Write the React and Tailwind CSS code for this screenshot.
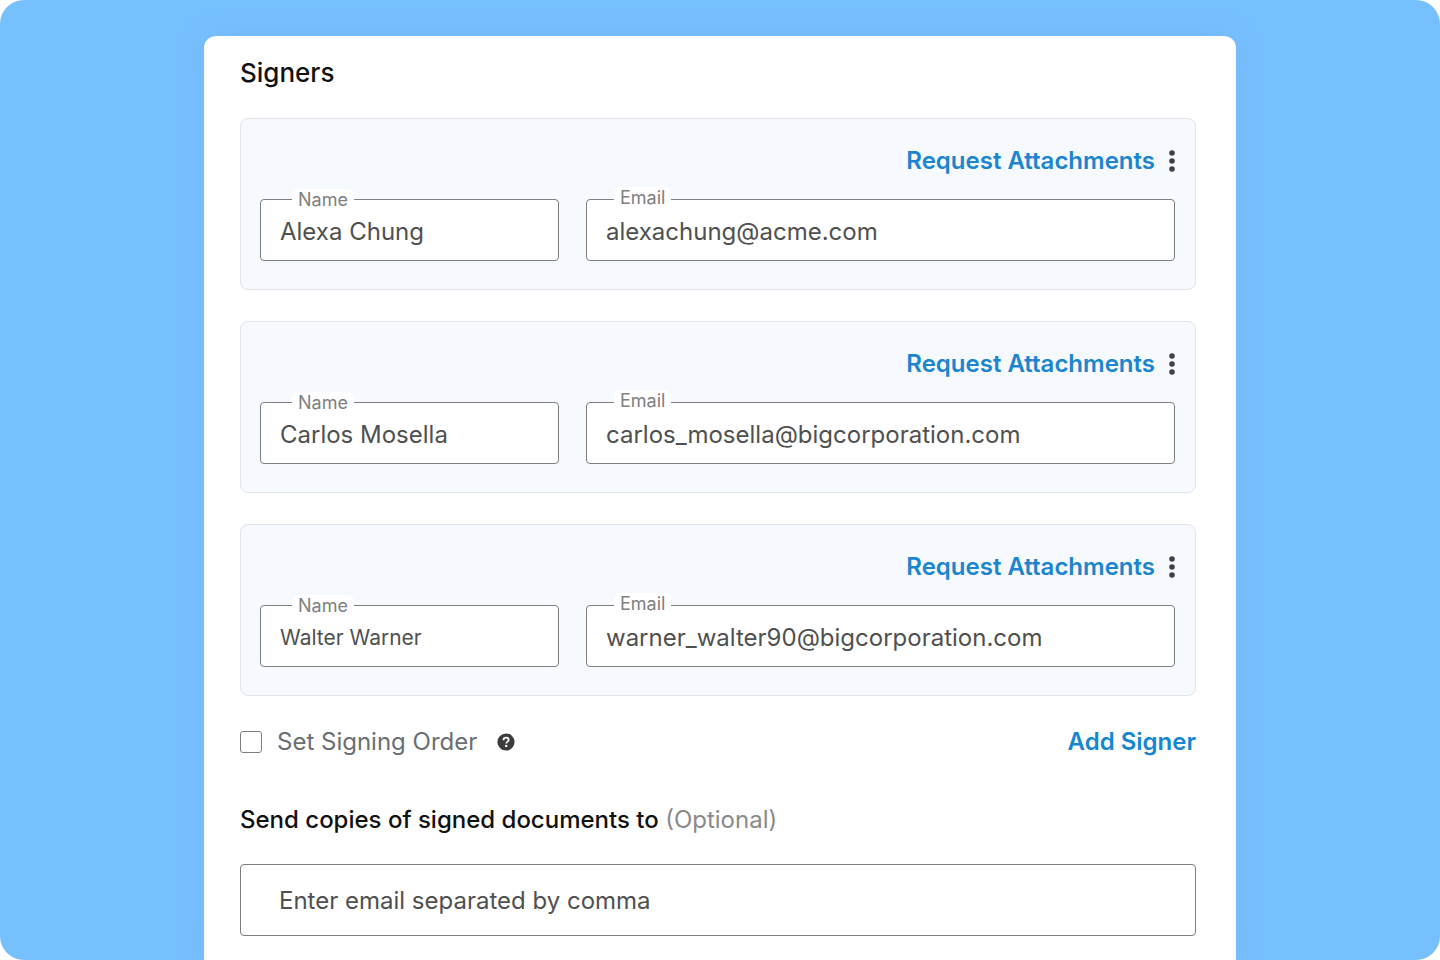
import { useState } from 'react';

const initialSigners = [
  { id: 1, name: 'Alexa Chung', email: 'alexachung@acme.com' },
  { id: 2, name: 'Carlos Mosella', email: 'carlos_mosella@bigcorporation.com' },
  { id: 3, name: 'Walter Warner', email: 'warner_walter90@bigcorporation.com', compact: true }
];

const MoreIcon = () => (
  <svg viewBox="0 0 6 22" className="h-[22px] w-[6px]" fill="#414141">
    <circle cx="3" cy="3" r="2.8" />
    <circle cx="3" cy="11" r="2.8" />
    <circle cx="3" cy="19" r="2.8" />
  </svg>
);

const HelpIcon = () => (
  <svg viewBox="0 0 18 18" className="size-[18px]" fill="none">
    <circle cx="9" cy="9" r="8.6" fill="#3c3c3c" />
    <path d="M6.5 7.2c0-1.5 1.1-2.5 2.6-2.5s2.6.9 2.6 2.2c0 1.7-2.4 1.8-2.4 3.5" stroke="#fff" strokeWidth="1.8" />
    <circle cx="9.2" cy="12.9" r="1.2" fill="#fff" />
  </svg>
);

const Field = ({ id, label, type = 'text', value, onChange, labelClass, textClass = 'text-[24px]' }) => (
  <div className="relative">
    <label
      htmlFor={id}
      className={`absolute h-6 rounded-md bg-white px-1.5 text-[18px] leading-[22px] text-[#808080] ${labelClass}`}
    >
      {label}
    </label>
    <input
      id={id}
      type={type}
      value={value}
      onChange={onChange}
      className={`h-[62px] w-full rounded border border-[#7d7f81] bg-white px-[19px] pt-0.5 text-[#505050] outline-none ${textClass}`}
    />
  </div>
);

const SignerCard = ({ signer, onChange }) => (
  <section className="rounded-lg border border-[#e1e5ea] bg-[#f6f9fd] pt-6 pr-5 pb-7 pl-[19px]">
    <div className="flex items-center justify-end gap-3.5">
      <button className="text-[24px] leading-9 font-semibold text-[#1c85d0]">Request Attachments</button>
      <button aria-label="More options">
        <MoreIcon />
      </button>
    </div>
    <div className="mt-5 grid grid-cols-[299px_1fr] gap-[27px]">
      <Field
        id={`name-${signer.id}`}
        label="Name"
        labelClass="-top-2.5 left-8"
        textClass={signer.compact ? 'text-[21px]' : 'text-[24px]'}
        value={signer.name}
        onChange={e => onChange(signer.id, 'name', e.target.value)}
      />
      <Field
        id={`email-${signer.id}`}
        label="Email"
        labelClass="-top-3 left-7"
        type="email"
        value={signer.email}
        onChange={e => onChange(signer.id, 'email', e.target.value)}
      />
    </div>
  </section>
);

const App = () => {
  const [signers, setSigners] = useState(initialSigners);
  const [ordered, setOrdered] = useState(false);
  const [copies, setCopies] = useState('');

  // Update one field of one signer
  const handleChange = (id, key, value) => {
    setSigners(signers.map(s => (s.id === id ? { ...s, [key]: value } : s)));
  };

  // Append an empty signer
  const handleAdd = () => {
    setSigners([...signers, { id: signers.length + 1, name: '', email: '' }]);
  };

  return (
    <div className="flex min-h-screen justify-center overflow-hidden rounded-[24px] bg-[#77c0ff] pt-9 font-['Inter',sans-serif]">
      <main className="w-full max-w-[1032px] rounded-t-xl bg-white pt-4 pr-10 pb-6 pl-9 shadow-[0_0_32px_rgba(90,130,220,0.14)]">
        <h1 className="text-[26px] leading-[42px] font-medium text-[#111]">Signers</h1>
        {/* Signer list */}
        <div className="mt-6 flex flex-col gap-[31px]">
          {signers.map(signer => (
            <SignerCard key={signer.id} signer={signer} onChange={handleChange} />
          ))}
        </div>
        {/* Signing order */}
        <div className="mt-7 flex items-center text-[24px] leading-9">
          <input
            id="signing-order"
            type="checkbox"
            checked={ordered}
            onChange={e => setOrdered(e.target.checked)}
            className="size-[22px] appearance-none rounded-[3px] border border-[#7d7f81] bg-white checked:bg-[#1c85d0]"
          />
          <label htmlFor="signing-order" className="ml-[15px] text-[#696f72]">
            Set Signing Order
          </label>
          <button aria-label="About signing order" className="ml-5">
            <HelpIcon />
          </button>
          <button onClick={handleAdd} className="ml-auto font-semibold text-[#1587d1]">
            Add Signer
          </button>
        </div>
        {/* Copies */}
        <label htmlFor="copies" className="mt-[42px] block text-[24px] leading-9 font-medium text-[#111]">
          Send copies of signed documents to <span className="font-normal text-[#8a8a8a]">(Optional)</span>
        </label>
        <input
          id="copies"
          value={copies}
          onChange={e => setCopies(e.target.value)}
          placeholder="Enter email separated by comma"
          className="mt-[26px] h-[72px] w-full rounded border border-[#7d7f81] px-[38px] text-[24px] text-[#505050] outline-none placeholder:text-[#505050]"
        />
      </main>
    </div>
  );
};

export default App;
